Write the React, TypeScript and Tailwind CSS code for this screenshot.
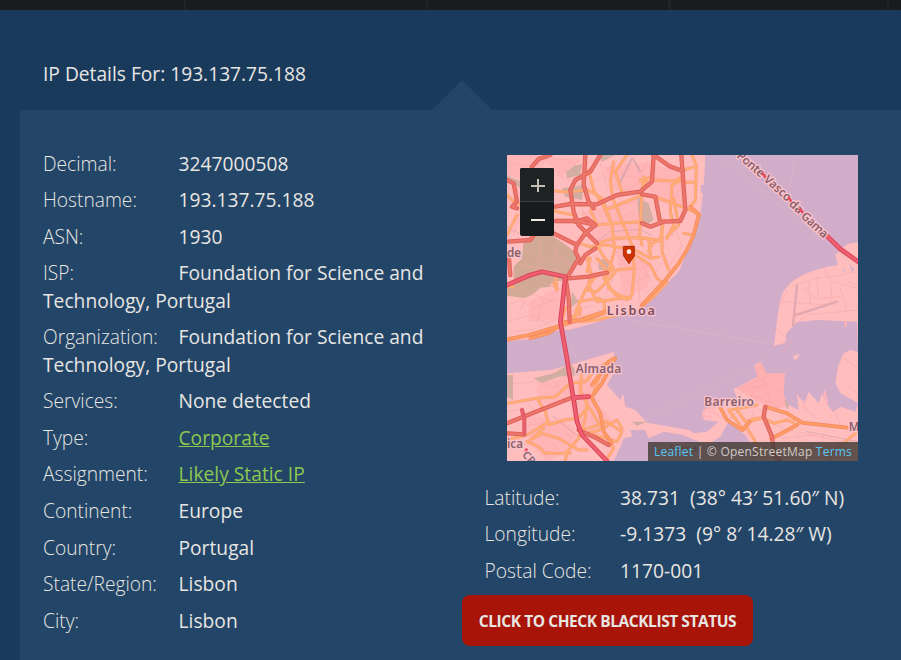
import type { ReactNode } from "react";

const details: { label: string; value: string; link?: boolean }[] = [
  { label: "Decimal:", value: "3247000508" },
  { label: "Hostname:", value: "193.137.75.188" },
  { label: "ASN:", value: "1930" },
  { label: "ISP:", value: "Foundation for Science and Technology, Portugal" },
  { label: "Organization:", value: "Foundation for Science and Technology, Portugal" },
  { label: "Services:", value: "None detected" },
  { label: "Type:", value: "Corporate", link: true },
  { label: "Assignment:", value: "Likely Static IP", link: true },
  { label: "Continent:", value: "Europe" },
  { label: "Country:", value: "Portugal" },
  { label: "State/Region:", value: "Lisbon" },
  { label: "City:", value: "Lisbon" },
];

const position = [
  { label: "Latitude:", value: "38.731\u00a0 (38° 43′ 51.60″ N)" },
  { label: "Longitude:", value: "-9.1373\u00a0 (9° 8′ 14.28″ W)" },
  { label: "Postal Code:", value: "1170-001" },
];

function Row({ label, children }: { label: string; children: ReactNode }) {
  return (
    <li className="mb-[9.19px] leading-[27.37px]">
      <span className="inline-block w-[135.5px] font-light">{label}</span>
      <span className="tracking-[.02px]">{children}</span>
    </li>
  );
}

const streets = [
  "M0 20Q60 45 95 20T200 25M10 80L60 140L30 210M150 60L230 95L290 60L340 110M280 20L300 100L360 150M190 230L240 280L300 250L350 290M330 300L370 350L430 330M260 320L320 370L290 430M380 380L440 360L480 300M430 60L500 90M440 130L520 150M420 260L500 240M100 380L200 420M30 400L140 440",
  "M0 120L40 160L20 240M300 130L390 90L420 20M310 200L380 170M360 20L340 60L400 70M230 170L260 240M170 300L200 360M400 310L430 380M460 250L490 290M340 400L350 459M395 380L400 459",
  "M0 500L70 480L130 510M20 530L90 520L150 490M0 690L80 680L150 700M60 740L110 800L70 860M130 670L180 720M150 790L190 850M210 700L280 740M240 770L300 850M60 810L190 800M110 840L160 890M250 640L220 690M0 770L50 760M190 890L250 870",
  "M730 720L800 745L840 800M710 700L790 690M780 800L860 830L900 880M820 850L930 840M850 730L930 790M970 740L1000 810M870 830L1053 870M950 840L930 918M740 770L720 840M1010 610L1053 640M1020 690L1053 720",
  "M840 408L820 440L960 450M858 392L930 370L1000 360L1053 350M930 365L935 430L1000 425M875 500L900 480L1053 465M810 520L850 560L830 590M760 630L780 660M690 700L780 670M980 380L1053 400",
  "M0 450L40 435L80 460L150 430M30 480L60 430M90 500L110 430M60 290L100 320L150 300L190 330M100 260L90 370M150 250L145 370M40 330L170 350M330 20L300 45L340 60M400 150L430 180L400 200M490 110L520 130M500 220L525 270L490 330M420 410L450 390M195 470L260 450L280 470M210 120L230 180M340 150L385 140",
  "M950 340L970 370L975 440M905 380L910 450M890 400L925 430M1000 400L1020 470M1010 520L1018 500M1025 380L1053 390M700 715L820 670M730 690L745 740M770 675L790 740M750 640L755 670M800 700L830 710",
];

const lightRoads = [
  "M145 108L190 112L230 105M100 145L150 170L200 180L220 210",
  "M320 20L310 80L315 115M360 0L325 50L345 110M410 65L405 110L398 240L405 270",
  "M440 75L500 78L528 65M400 78L425 68L410 90",
  "M245 45L260 105L290 155L315 210L323 285L305 350",
  "M235 100L285 130L310 195M250 165L270 210L320 205L405 200M295 165L395 125L405 110",
  "M315 125L350 210L375 270L382 340L375 420L365 430",
  "M200 190L235 235L270 265L320 250L390 248L460 255L470 195",
  "M215 265L250 275L300 270L390 288L430 310L455 306",
  "M270 270L290 305L320 340L290 370L325 420L370 430",
  "M240 305L250 350L245 390L270 440L345 430M305 350L250 360M235 405L270 410L300 380L330 345L375 340",
  "M385 300L430 330L450 370L475 390M390 248L425 250L430 300M460 255L435 265L425 290",
  "M270 310L295 340L305 400L360 435M250 310L240 350M265 365L235 405L215 450L205 490M215 440L275 430L292 440V468M145 365L150 405L140 385",
  "M480 250L500 210L490 170L495 90L525 75M465 210V290L485 345",
  "M445 125L575 175M500 130L515 210L480 245",
  "M0 120L25 145L50 150M0 395L20 395M30 180L10 220L0 240",
  "M555 0L568 30L565 135L550 155L578 178L560 240L530 235M528 45L565 35M535 82L565 82",
  "M0 556L70 540L160 515L205 480L210 459M220 500L270 495L330 480M165 500L175 459M218 480L220 459",
  "M0 745L90 730L145 725L190 685L235 680L270 640L325 610M225 640L220 710L245 755L285 820M320 610L310 635L280 660L255 725M90 730L115 770L125 810L170 795L215 790L240 760M240 725L235 790L225 825L260 815L300 800L345 830L330 860L300 850",
  "M110 820L70 855L105 835L155 850L215 885L240 885M175 918L180 890L215 850L230 825M245 835L300 850L320 880L300 910M60 860L95 875L115 895L190 895",
  "M0 855L60 840L125 800M215 840L280 825L330 795L345 820",
  "M665 765L710 825L728 800L760 790M690 765L715 800L745 790L770 790M670 765L750 750M770 790L800 805L840 795L860 803M718 815L745 860L770 918",
  "M1053 820L1045 835L985 885L965 918M880 803L820 835L790 850",
  "M480 380L445 420L400 459",
];

const orangeRoads = [
  "M0 553L65 540L160 512L215 495L292 470M405 450L475 375L515 325L540 285L560 240L575 180L550 155",
  "M70 550L125 535L175 500M160 505L240 492L290 475",
  "M255 725L285 685L315 625L325 610L305 620L255 690",
  "M255 730L280 775L290 830L315 865",
  "M775 755L840 775L885 803L1020 818",
  "M640 758L660 795L705 825L728 800M795 850L835 830L870 810",
];

const redRoads = [
  "M70 95L75 35L95 12L130 0M0 75L20 85L30 140L15 155L30 160M0 260L70 255L95 220",
  "M280 0L250 50L205 75L190 105L200 170L215 210L270 265",
  "M235 0L230 90L245 140L260 160",
  "M145 155L190 147L270 148L330 120L400 110L435 80L440 0",
  "M145 198L210 198L265 210L235 235L210 270L140 235",
  "M265 210L240 190L205 200M210 265L205 290L215 310L185 360M265 280L235 300L220 325",
  "M440 0L490 35L528 48M405 118L445 125L460 205M405 205L430 215L470 200L520 198L535 165L523 0",
  "M185 370L245 365L300 353M5 300L10 360M175 365L185 430L188 500",
  "M0 805L100 765L190 730M0 835L50 838M215 825L260 845L305 870",
  "M775 755L770 785L795 845L802 900L820 918",
];

/* Tiles use a 3-unit-per-pixel drawing space. */
function CityMap() {
  return (
    <svg className="block h-full w-full" viewBox="0 0 1053 918" preserveAspectRatio="none" fill="none" strokeLinejoin="round" strokeLinecap="round">
      <rect width="1053" height="918" fill="#ffbdbd" />
      <path d="M50 250L130 238L190 280L210 300L205 330L180 375L135 380L130 395L100 398L75 420L50 430L0 422V385L20 378L20 335L45 310Z" fill="#d2a995" />
      <g fill="#d2ada2">
        <path d="M0 62L40 78L70 100L60 115L0 70ZM175 35L225 28L220 60L180 70ZM165 100L230 90L225 135L175 125ZM270 0L325 0L285 20ZM390 125L425 145L440 195L420 210L385 180ZM275 315L300 310L305 345L275 345ZM195 410L215 440L190 459Z" />
        <path d="M80 670L140 655L190 625L215 660L155 665L105 685ZM0 660L18 660L18 735L0 725ZM200 740L225 730L228 765L205 780ZM375 800L420 800L390 812ZM830 730L848 745L840 765Z" />
      </g>
      <g fill="#ffb5b5">
        <path d="M0 0L120 0L90 100L40 70L0 60ZM110 10L230 10L160 65ZM290 35L430 20L405 110L320 105ZM220 175L390 125L400 240L280 275ZM325 280L430 330L420 400L350 430ZM400 20L528 50V150L440 140ZM65 440L155 400L165 490L65 500Z" />
        <path d="M90 690L190 660L205 720L130 750L90 735ZM205 670L270 670L260 730L320 800L260 840L215 800ZM60 780L200 810L210 880L120 918L70 870Z" />
      </g>

      <path
        d="M595 0H1053V262L1020 268L1000 285L985 300L993 330C900 345 842 374 823 425C812 460 810 515 800 573L835 563L838 535L870 502L930 495L1050 500L1053 590L1030 585L1010 595L993 635L985 685L1000 714L1053 745L1045 770L1000 755L978 770L958 745L945 715L935 745L905 710L892 745L870 718L875 765L845 750L830 720L833 655L780 660L758 622L742 630L752 665L680 703L690 730L640 750L590 765L590 794L635 800L600 830L560 835L545 825L420 803L385 765L355 755L348 715L340 735L300 690L320 655L322 590L205 625L130 645L0 655V558L65 553L170 522L185 525L260 505L320 485L390 470L450 415L515 350L556 255L578 195L590 100Z"
        fill="#d2adca"
      />
      <path d="M340 875L350 850L375 845L370 825L415 825L425 850L470 830L528 840L600 870L640 845L665 800L715 840L745 885V918H320Z" fill="#d2adca" />
      <path d="M690 700L752 665L742 630L763 622L778 655L833 655L830 715L835 755L810 760L750 740Z" fill="#ffb0b1" />
      <path d="M858 603L877 597L873 610L863 615Z" fill="#ffbdbd" />
      <g fill="#d2adca">
        <path d="M1005 335L1018 355L1010 350ZM1025 325L1042 345L1035 350ZM592 90H582V115H590Z" />
      </g>
      <path d="M625 758Q580 760 590 785Q615 780 610 790M655 790Q605 770 605 765M888 740L900 765M952 710L960 745M1016 495V512" stroke="#ffb5b7" strokeWidth="7" />
      <path d="M630 0L1020 310M865 0L850 95M370 495L795 567M420 790L745 630M195 570L210 615M775 600L795 575" stroke="#dbb7c9" strokeWidth="2" />

      {streets.map((d) => (
        <path key={d} d={d} stroke="#f5a4a5" strokeWidth="2" opacity=".75" />
      ))}
      <path d="M870 392L858 512M862 482L990 440M375 10L335 90M380 15L400 50" stroke="#dba2ac" strokeWidth="7" opacity=".8" />
      <path d="M0 215L35 235M270 260L310 230L400 223L435 243M140 785L215 845M660 800L705 755M900 830L1053 860" stroke="#c69aa3" strokeWidth="2" strokeDasharray="8 4" />

      {lightRoads.map((d) => (
        <path key={d} d={d} stroke="#fb9c7c" strokeWidth="9" />
      ))}
      {lightRoads.map((d) => (
        <path key={d} d={d} stroke="#ffac75" strokeWidth="6" />
      ))}
      {orangeRoads.map((d) => (
        <path key={d} d={d} stroke="#f0885e" strokeWidth="11" />
      ))}
      {orangeRoads.map((d) => (
        <path key={d} d={d} stroke="#ff9c65" strokeWidth="7" />
      ))}
      {redRoads.map((d) => (
        <path key={d} d={d} stroke="#e0625c" strokeWidth="13" />
      ))}
      {redRoads.map((d) => (
        <path key={d} d={d} stroke="#ec766a" strokeWidth="7" />
      ))}
      <g strokeWidth="14" stroke="#dc4259">
        <path d="M0 390L70 360L105 350L175 365L165 459L160 500L178 600L200 735L210 800L225 840L300 918M200 728L245 725" />
        <path d="M955 238L1000 282L1053 320" />
      </g>
      <g strokeWidth="8" stroke="#ee6070">
        <path d="M0 390L70 360L105 350L175 365L165 459L160 500L178 600L200 735L210 800L225 840L300 918M200 728L245 725" />
        <path d="M955 238L1000 282L1053 320" />
      </g>
      <path d="M45 765L52 790V838" stroke="#e4616a" strokeWidth="13" />
      <path d="M58 885V892" stroke="#e94b5c" strokeWidth="10" />

      <g className="font-['Noto_Sans'] font-semibold" fill="#8b606c" stroke="#fac3ca" strokeWidth="8" paintOrder="stroke">
        <text x="299" y="479" fontSize="38" textLength="145" fill="#7b4c5b">Lisboa</text>
        <text x="206" y="653" fontSize="36" textLength="137">Almada</text>
        <text x="592" y="754" fontSize="36" textLength="149">Barreiro</text>
        <text x="0" y="306" fontSize="35">de</text>
        <text x="0" y="879" fontSize="35">ica</text>
        <text x="1025" y="828" fontSize="35">M</text>
        <text x="485" y="890" fontSize="34">Seixal</text>
        <text fontSize="32" transform="translate(44 900) rotate(49)">CR</text>
        <text fontSize="36" transform="translate(687 5) rotate(41)" textLength="98">Ponte</text>
        <text fontSize="36" transform="translate(768 76) rotate(42)" textLength="98">Vasco</text>
        <text fontSize="36" transform="translate(844 149) rotate(43)">da</text>
        <text fontSize="36" transform="translate(880 186) rotate(43)" textLength="96">Gama</text>
      </g>
      <path d="M768 56L774 65M846 129L851 137M880 163L886 171" stroke="#e94b5c" strokeWidth="8" />
      <path d="M350 274H382V303L366 326L350 303Z" fill="#cf3504" stroke="#a82909" strokeWidth="3" />
      <circle cx="366" cy="290" r="7" fill="#fff1e9" />
    </svg>
  );
}

function MapPanel() {
  return (
    <div className="relative ml-[46px] h-[306px] w-[351px] overflow-hidden">
      <CityMap />
      <div className="absolute left-[13px] top-[13px] flex h-[68px] w-[34px] flex-col overflow-hidden rounded-[2px] bg-[#181b1d]">
        <button aria-label="Zoom in" className="flex h-[34px] items-center justify-center border-b border-[#3b4041] bg-[#1e2223]">
          <svg width="18" height="18" viewBox="0 0 18 18" className="ml-[2px] mt-[3px]" fill="#c4bdb1"><path d="M2 8H8V2H10V8H16V10H10V15H8V10H2Z" /></svg>
        </button>
        <button aria-label="Zoom out" className="flex h-[34px] items-center justify-center">
          <svg width="18" height="18" viewBox="0 0 18 18" className="ml-[2px] mt-[2px]" fill="#eee9df"><path d="M2 8H16V10H2Z" /></svg>
        </button>
      </div>
      <div className="absolute bottom-0 right-0 flex h-[19px] w-[210px] items-center justify-center whitespace-pre bg-[#483e3b]/85 text-[12px] leading-[19px] tracking-[.23px] text-[#d0ccc6]">
        <a className="text-[#55c8f4]">Leaflet</a> | © OpenStreetMap <a className="text-[#55c8f4]">Terms</a>
      </div>
    </div>
  );
}

export default function App() {
  return (
    <div className="h-[660px] w-[901px] overflow-hidden bg-[#1a3a5c] font-['Open_Sans',sans-serif] text-[19.2px] text-[#e8e6e3]">
      <nav className="flex h-[10px] bg-[#191b1c]">
        <div className="w-[186px] border-r-2 border-[#212425]" />
        <div className="w-[242px] border-r-2 border-[#212425]" />
        <div className="w-[243px] border-r-[3px] border-[#212425]" />
        <div className="w-[218px] border-r-2 border-[#212425]" />
      </nav>
      <header className="relative h-[100px] pl-[43px] pt-[50px]">
        <h1 className="leading-[28px]">IP Details For: 193.137.75.188</h1>
        <div className="absolute bottom-0 left-[432px] h-[30px] w-[60px] bg-[#234567] [clip-path:polygon(50%_0,100%_100%,0_100%)]" />
      </header>
      <main className="ml-[20px] flex h-[550px] bg-[#234567]">
        <ul className="w-[441px] pl-[23px] pr-[16px] pt-[39.77px]">
          {details.map((item) => (
            <Row key={item.label} label={item.label}>
              {item.link ? <a className="text-[#8dc850] underline">{item.value}</a> : item.value}
            </Row>
          ))}
        </ul>
        <section className="w-[440px] pt-[45px]">
          <MapPanel />
          <ul className="h-[134px] pl-[23.5px] pt-[22.77px]">
            {position.map((item) => (
              <Row key={item.label} label={item.label}>{item.value}</Row>
            ))}
          </ul>
          <button className="ml-[1px] block h-[51px] w-[291px] rounded-[8px] bg-[#a81407] pt-[3px] text-[15.5px] font-bold tracking-[-.43px]">
            CLICK TO CHECK BLACKLIST STATUS
          </button>
        </section>
      </main>
    </div>
  );
}
